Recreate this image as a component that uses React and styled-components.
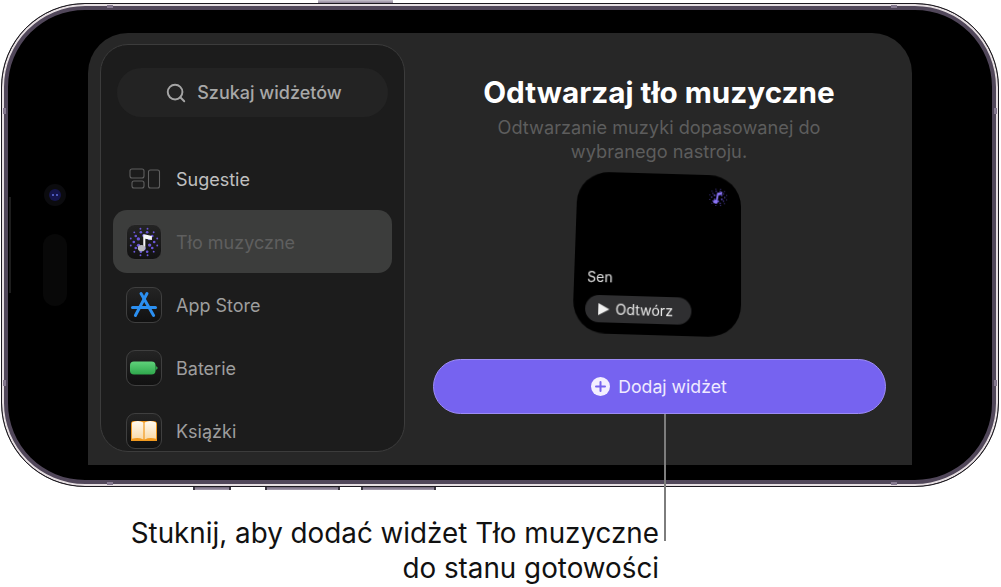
import styled, { createGlobalStyle } from "styled-components"
import { Search } from "lucide-react"

const GlobalStyle = createGlobalStyle`
    html, body {
        margin: 0;
        padding: 0;
        background: #ffffff;
    }
`

// dots for the ambient music icon, ring by ring
const rings = [
    { count: 12, radius: 14.5, size: 1, phase: 0.26 },
    { count: 10, radius: 10.8, size: 1.4, phase: 0 },
    { count: 6, radius: 6.8, size: 1.8, phase: 0.5 },
]

const DotRings = ({ fill, scale = 1 }) => (
    <>
        {rings.map((ring) =>
            Array.from({ length: ring.count }).map((_, i) => {
                const angle = (i / ring.count) * Math.PI * 2 + ring.phase
                return (
                    <circle
                        key={`${ring.radius}-${i}`}
                        cx={18 + Math.cos(angle) * ring.radius}
                        cy={18 + Math.sin(angle) * ring.radius}
                        r={ring.size * scale}
                        fill={fill}
                    />
                )
            })
        )}
    </>
)

const MusicIcon = () => (
    <svg width="34" height="34" viewBox="0 0 36 36">
        <DotRings fill="#6a56d8" />
        <path d="M17.2 10 L19.4 10 L26.4 11.6 L26.4 15.8 L19.4 14.6 L19.4 24 L17.2 24 Z" fill="#f4f4f6" />
        <ellipse cx="15.4" cy="24.6" rx="3.9" ry="3.3" fill="#b9b9bf" />
    </svg>
)

const SmallMusicIcon = () => (
    <svg width="22" height="22" viewBox="0 0 36 36">
        <DotRings fill="#5a49bb" scale={0.85} />
        <path d="M16 10.5 L25 8 L24 13 L18.6 14.6 L16.8 25 L14 24.6 Z" fill="#8a74f6" />
        <ellipse cx="13.6" cy="25.6" rx="4" ry="3.2" fill="#8a74f6" />
    </svg>
)

const StoreIcon = () => (
    <svg width="28" height="30" viewBox="0 0 28 30">
        <g stroke="#2b8ff0" strokeWidth="3" strokeLinecap="round" fill="none">
            <path d="M17 3.5 L5.4 25.5" />
            <path d="M11 3.5 L23.6 25.5" />
            <path d="M2.5 17.5 L25.5 17.5" />
        </g>
    </svg>
)

const BatteryIcon = () => (
    <svg width="28" height="14" viewBox="0 0 28 14">
        <defs>
            <linearGradient id="batteryFill" x1="0" x2="0" y1="0" y2="1">
                <stop offset="0" stopColor="#5fd27a" />
                <stop offset="1" stopColor="#2fa84c" />
            </linearGradient>
        </defs>
        <rect x="0" y="0.5" width="25.5" height="13" rx="4" fill="url(#batteryFill)" />
        <path d="M25.5 4.5 L28 7 L25.5 9.5 Z" fill="#2fa84c" />
    </svg>
)

const BookIcon = () => (
    <svg width="28" height="24" viewBox="0 0 28 24">
        <defs>
            <linearGradient id="bookPage" x1="0" x2="0" y1="0" y2="1">
                <stop offset="0" stopColor="#fffaf0" />
                <stop offset="1" stopColor="#f8d9a8" />
            </linearGradient>
        </defs>
        <path d="M1 5 Q1 2 4 2 L23 2 Q27 2 27 5 L27 22 L1 22 Z" fill="#f29a1f" />
        <path d="M2 3.6 Q8 0.6 13.4 3.6 L13.4 20.4 Q8 17.8 2 19.8 Z" fill="url(#bookPage)" />
        <path d="M26 3.6 Q20 0.6 14.6 3.6 L14.6 20.4 Q20 17.8 26 19.8 Z" fill="url(#bookPage)" />
    </svg>
)

const SuggestIcon = () => (
    <svg width="32" height="21" viewBox="0 0 32 21" fill="none" stroke="#5f5f5f" strokeWidth="1.1">
        <rect x="1" y="1" width="14" height="9" rx="2" />
        <rect x="3" y="13" width="12" height="7" rx="2" />
        <rect x="19.5" y="2" width="11" height="18" rx="2" />
    </svg>
)

const PlusIcon = () => (
    <svg width="19" height="19" viewBox="0 0 19 19">
        <circle cx="9.5" cy="9.5" r="9.5" fill="#f3efff" />
        <path d="M9.5 5 L9.5 14 M5 9.5 L14 9.5" stroke="#7663f0" strokeWidth="2" strokeLinecap="round" />
    </svg>
)

const widgets = [
    { name: "Tło muzyczne", icon: <MusicIcon />, active: true },
    { name: "App Store", icon: <StoreIcon /> },
    { name: "Baterie", icon: <BatteryIcon /> },
    { name: "Książki", icon: <BookIcon /> },
]

const App = () => {
    return (
        <Page>
            <GlobalStyle />
            <Phone>
                <TopButton />
                <BottomButton $left={193} $width={38} />
                <BottomButton $left={265} $width={75} />
                <BottomButton $left={361} $width={75} />
                <AntennaH $left={105} $edge="top" />
                <AntennaH $left={889} $edge="top" />
                <AntennaH $left={105} $edge="bottom" />
                <AntennaH $left={889} $edge="bottom" />
                <AntennaV $top={104} $edge="left" />
                <AntennaV $top={104} $edge="right" />
                <AntennaV $top={376} $edge="left" />
                <AntennaV $top={376} $edge="right" />
                <SideBand />
                <Halo>
                    <Lens>
                        <LensDot />
                        <LensDot />
                    </Lens>
                </Halo>
                <Island />
                <Sheet>
                    <Sidebar>
                        <SearchBox>
                            <Search size={22} color="#a5a5a5" strokeWidth={2.1} />
                            <span>Szukaj widżetów</span>
                        </SearchBox>
                        <SuggestRow>
                            <SuggestSlot>
                                <SuggestIcon />
                            </SuggestSlot>
                            <RowLabel $bright>Sugestie</RowLabel>
                        </SuggestRow>
                        {widgets.map((w) => (
                            <Row key={w.name} $active={w.active}>
                                <AppIcon>{w.icon}</AppIcon>
                                <RowLabel $dim={w.active}>{w.name}</RowLabel>
                            </Row>
                        ))}
                    </Sidebar>
                    <Detail>
                        <Title>Odtwarzaj tło muzyczne</Title>
                        <Subtitle>
                            Odtwarzanie muzyki dopasowanej do
                            <br />
                            wybranego nastroju.
                        </Subtitle>
                        <Widget>
                            <WidgetIcon>
                                <SmallMusicIcon />
                            </WidgetIcon>
                            <WidgetName>Sen</WidgetName>
                            <PlayPill>
                                <PlayTriangle />
                                Odtwórz
                            </PlayPill>
                        </Widget>
                        <AddButton>
                            <PlusIcon />
                            Dodaj widżet
                        </AddButton>
                    </Detail>
                </Sheet>
                <Leader />
            </Phone>
            <Caption>
                Stuknij, aby dodać widżet Tło muzyczne
                <br />
                do stanu gotowości
            </Caption>
        </Page>
    )
}

// Styles
const Page = styled.div`
    width: 1001px;
    height: 587px;
    padding: 3px 2px 0 1px;
    box-sizing: border-box;
    background: #ffffff;
    font-family: "Inter", "Liberation Sans", sans-serif;
    overflow: hidden;
`
const Phone = styled.div`
    position: relative;
    height: 484px;
    box-sizing: border-box;
    padding: 29px 86px 21px 86px;
    border: 1px solid #1d1a20;
    border-radius: 84px;
    background: #000000;
    box-shadow: inset 0 0 0 2px #e6dfe2, inset 0 0 0 6px #51475a;
    display: flex;
`
const TopButton = styled.div`
    position: absolute;
    top: -4px;
    left: 316px;
    width: 75px;
    height: 3px;
    background: linear-gradient(#c9c4cf, #8d8296);
`
const BottomButton = styled.div`
    position: absolute;
    bottom: -4px;
    left: ${(p) => p.$left - 2}px;
    width: ${(p) => p.$width}px;
    height: 3px;
    background: linear-gradient(#6f6478, #a79fb0);
    border-left: 2px solid #3a3540;
    border-right: 2px solid #3a3540;
    box-sizing: border-box;
`
const AntennaH = styled.div`
    position: absolute;
    ${(p) => p.$edge}: 1px;
    left: ${(p) => p.$left}px;
    width: 6px;
    height: 3px;
    background: #85798f;
`
const AntennaV = styled.div`
    position: absolute;
    ${(p) => p.$edge}: 1px;
    top: ${(p) => p.$top}px;
    width: 3px;
    height: 6px;
    background: #85798f;
`
const SideBand = styled.div`
    position: absolute;
    left: 7px;
    top: 193px;
    width: 2px;
    height: 96px;
    background: #1d1d1d;
`
const Halo = styled.div`
    position: absolute;
    left: 42px;
    top: 180px;
    width: 22px;
    height: 22px;
    display: flex;
    align-items: center;
    justify-content: center;
    border-radius: 50%;
    background: #0b0b0e;
`
const Lens = styled.div`
    width: 12px;
    height: 12px;
    display: flex;
    align-items: center;
    justify-content: center;
    gap: 2px;
    border-radius: 50%;
    background: #15154c;
`
const LensDot = styled.span`
    width: 2px;
    height: 2px;
    border-radius: 50%;
    background: #5f6fe0;
`
const Island = styled.div`
    position: absolute;
    left: 41px;
    top: 230px;
    width: 24px;
    height: 72px;
    border-radius: 12px;
    background: #080808;
`
const Sheet = styled.div`
    flex: 1;
    display: flex;
    box-sizing: border-box;
    padding: 11px 25px 13px 12px;
    background: #272727;
    border-radius: 40px 40px 0 0;
    overflow: hidden;
`
const Sidebar = styled.div`
    width: 305px;
    flex: none;
    box-sizing: border-box;
    height: 408px;
    padding: 23px 12px 0;
    background: #1c1c1c;
    border: 1px solid #3c3c3c;
    border-radius: 28px;
    overflow: hidden;
`
const SearchBox = styled.div`
    height: 49px;
    margin: 0 4px;
    padding-left: 2px;
    display: flex;
    align-items: center;
    justify-content: center;
    gap: 10px;
    border-radius: 25px;
    background: #232323;
    color: #a8a8a8;
    font-size: 18px;
    font-weight: 500;
`
const SuggestRow = styled.div`
    height: 63px;
    margin-top: 30px;
    display: flex;
    align-items: center;
    box-sizing: border-box;
`
const SuggestSlot = styled.div`
    width: 63px;
    padding-left: 16px;
    box-sizing: border-box;
    display: flex;
`
const Row = styled.div`
    height: 63px;
    display: flex;
    align-items: center;
    padding-left: 13px;
    gap: 14px;
    border-radius: 14px;
    background: ${(p) => (p.$active ? "#3c3d3c" : "transparent")};
`
const AppIcon = styled.div`
    width: 36px;
    height: 36px;
    box-sizing: border-box;
    flex: none;
    display: flex;
    align-items: center;
    justify-content: center;
    border-radius: 9px;
    border: 1px solid #3f3f3f;
    background: linear-gradient(#242424, #111111);
`
const RowLabel = styled.span`
    font-size: 18px;
    padding-top: 2px;
    color: ${(p) => (p.$dim ? "#5f5f5f" : p.$bright ? "#c0c0c0" : "#9e9e9e")};
`
const Detail = styled.div`
    flex: 1;
    min-width: 0;
    display: flex;
    flex-direction: column;
    align-items: center;
    padding-left: 26px;
`
const Title = styled.h1`
    margin: 31px 0 0;
    font-size: 29.7px;
    line-height: 34px;
    font-weight: 700;
    color: #ffffff;
    white-space: nowrap;
`
const Subtitle = styled.p`
    margin: 6px 0 0;
    font-size: 18.2px;
    line-height: 24px;
    color: #5d5d5d;
    text-align: center;
    white-space: nowrap;
`
const Widget = styled.div`
    position: relative;
    margin: 8px 0 0 -3px;
    width: 166px;
    height: 164px;
    flex: none;
    box-sizing: border-box;
    padding: 0 0 11px 12px;
    display: flex;
    flex-direction: column;
    justify-content: flex-end;
    align-items: flex-start;
    background: #000000;
    border-radius: 32px;
    transform: perspective(800px) rotateX(10deg) skewY(0.7deg) rotate(1deg);
`
const WidgetIcon = styled.div`
    position: absolute;
    top: 12px;
    right: 12px;
    display: flex;
`
const WidgetName = styled.div`
    font-size: 14px;
    color: #e2e2e2;
    margin: 0 0 10px 1px;
`
const PlayPill = styled.div`
    display: flex;
    align-items: center;
    gap: 6px;
    width: 105px;
    height: 27px;
    box-sizing: border-box;
    padding-left: 13px;
    border-radius: 14px;
    background: #2f2f31;
    color: #e8e8e8;
    font-size: 14px;
`
const PlayTriangle = styled.span`
    width: 0;
    height: 0;
    border-style: solid;
    border-width: 6px 0 6px 11px;
    border-color: transparent transparent transparent #f0f0f0;
`
const AddButton = styled.div`
    margin-top: 24px;
    width: 453px;
    height: 55px;
    flex: none;
    box-sizing: border-box;
    display: flex;
    align-items: center;
    justify-content: center;
    gap: 8px;
    border: 1px solid #9d8cf5;
    border-radius: 28px;
    background: #7663f0;
    color: #efeaff;
    font-size: 17.7px;
`
const Leader = styled.div`
    position: absolute;
    left: 662px;
    top: 410px;
    width: 2px;
    height: 127px;
    background: #7d7d7d;
    z-index: 2;
`
const Caption = styled.div`
    width: 658px;
    margin-top: 29px;
    text-align: right;
    font-size: 27.8px;
    line-height: 35px;
    color: #111111;
`

export default App
